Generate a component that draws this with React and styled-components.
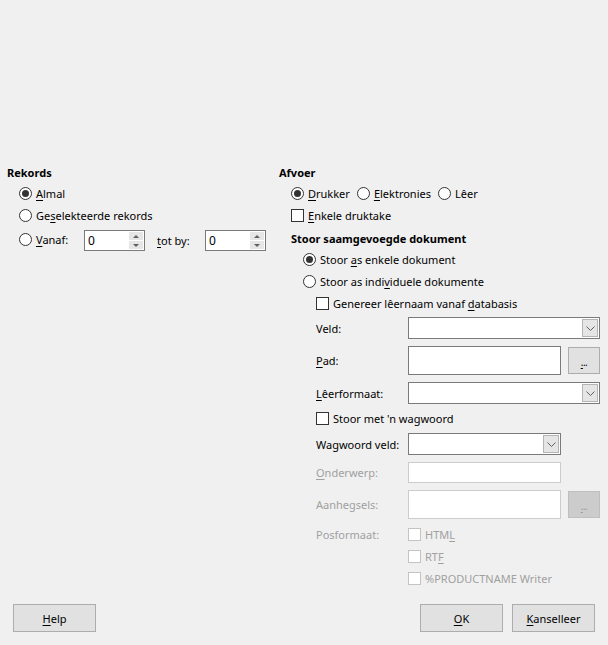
import React from 'react'
import styled, { createGlobalStyle } from 'styled-components'

const Global = createGlobalStyle`
  html, body {
    margin: 0;
    padding: 0;
    background: #f0f0f0;
  }
  body {
    font-family: "Noto Sans", "Open Sans", sans-serif;
    font-size: 11px;
    color: #000;
  }
`

const Page = styled.div`
  width: 608px;
  height: 645px;
  display: flex;
  flex-direction: column;
  box-sizing: border-box;
  padding-top: 164px;
`

const Columns = styled.div`
  display: grid;
  grid-template-columns: 272px 1fr;
  padding-left: 7px;
`

const Column = styled.div`
  display: flex;
  flex-direction: column;
`

const Title = styled.div`
  font-weight: bold;
  height: 17px;
  line-height: 17px;
  margin-left: ${p => p.$indent || 0}px;
  margin-top: ${p => p.$top || 0}px;
  margin-bottom: 1px;
`

const Row = styled.div`
  display: flex;
  align-items: center;
  height: ${p => p.$h || 22}px;
  margin-left: ${p => p.$indent || 0}px;
  margin-top: ${p => p.$top || 0}px;
  white-space: nowrap;
`

const Mn = styled.span`
  text-decoration: underline;
  text-underline-offset: 2px;
`

const Choice = styled.label`
  display: inline-flex;
  align-items: center;
  gap: 4px;
  margin-right: ${p => p.$mr || 0}px;
`

const RadioDot = styled.span`
  width: 13px;
  height: 13px;
  box-sizing: border-box;
  border: 1px solid #333;
  border-radius: 50%;
  background: #fff;
  display: inline-flex;
  align-items: center;
  justify-content: center;
  flex-shrink: 0;
  &::after {
    content: '';
    width: 7px;
    height: 7px;
    border-radius: 50%;
    background: #333;
    display: ${p => (p.$on ? 'block' : 'none')};
  }
`

const Box = styled.span`
  width: 13px;
  height: 13px;
  box-sizing: border-box;
  border: 1px solid ${p => (p.$disabled ? '#c4c4c4' : '#333')};
  background: #fff;
  flex-shrink: 0;
`

const Radio = ({ on, children, mr }) => (
  <Choice $mr={mr}>
    <RadioDot $on={on} />
    <span>{children}</span>
  </Choice>
)

const Check = ({ children, disabled }) => (
  <Choice>
    <Box $disabled={disabled} />
    <span>{children}</span>
  </Choice>
)

const SpinLabel = styled.span`
  width: ${p => p.$w}px;
  margin-left: ${p => p.$ml || 0}px;
`

const SpinWrap = styled.div`
  width: 61px;
  height: 21px;
  box-sizing: border-box;
  border: 1px solid #7a7a7a;
  background: #fff;
  display: flex;
  align-items: stretch;
  padding: 1px;
`

const SpinText = styled.span`
  flex: 1;
  padding-left: 2px;
  line-height: 17px;
  font-size: 12px;
`

const SpinBtns = styled.div`
  width: 14px;
  display: flex;
  flex-direction: column;
  gap: 1px;
`

const SpinBtn = styled.div`
  flex: 1;
  background: #e6e6e6;
  display: flex;
  align-items: center;
  justify-content: center;
  &::after {
    content: '';
    border-left: 3px solid transparent;
    border-right: 3px solid transparent;
    ${p => (p.$up ? 'border-bottom: 3px solid #606060;' : 'border-top: 3px solid #606060;')}
  }
`

const Spin = ({ value }) => (
  <SpinWrap>
    <SpinText>{value}</SpinText>
    <SpinBtns>
      <SpinBtn $up />
      <SpinBtn />
    </SpinBtns>
  </SpinWrap>
)

const Form = styled.div`
  display: grid;
  grid-template-columns: 92px 153px 39px;
  row-gap: 7px;
  margin-left: 37px;
  margin-top: 3px;
`

const FieldLabel = styled.div`
  grid-column: 1 / 2;
  display: flex;
  align-items: center;
  height: ${p => p.$h || 22}px;
  color: ${p => (p.$disabled ? '#a0a0a0' : '#000')};
  white-space: nowrap;
`

const Field = styled.div`
  grid-column: ${p => (p.$wide ? '2 / 4' : '2 / 3')};
  height: ${p => p.$h || 22}px;
  box-sizing: border-box;
  border: 1px solid ${p => (p.$disabled ? '#cccccc' : '#7a7a7a')};
  background: #fff;
  display: flex;
  justify-content: flex-end;
  padding: 1px;
`

const DropBtn = styled.div`
  width: 16px;
  box-sizing: border-box;
  background: #e5e5e5;
  border: 1px solid #b4b4b4;
  display: flex;
  align-items: center;
  justify-content: center;
`

const Chevron = () => (
  <svg width="9" height="5" viewBox="0 0 9 5">
    <path d="M0.5 0.5 L4.5 4.5 L8.5 0.5" fill="none" stroke="#606060" strokeWidth="1" />
  </svg>
)

const Combo = ({ wide }) => (
  <Field $wide={wide}>
    <DropBtn>
      <Chevron />
    </DropBtn>
  </Field>
)

const Browse = styled.div`
  grid-column: 3 / 4;
  justify-self: end;
  align-self: center;
  width: 32px;
  height: ${p => p.$h}px;
  box-sizing: border-box;
  background: ${p => (p.$disabled ? '#cccccc' : '#e1e1e1')};
  border: 1px solid ${p => (p.$disabled ? '#bfbfbf' : '#adadad')};
  color: ${p => (p.$disabled ? '#9a9a9a' : '#000')};
  display: flex;
  align-items: flex-end;
  justify-content: center;
  padding-bottom: 6px;
  font-size: 10px;
  line-height: 10px;
  letter-spacing: -0.5px;
`

const FullRow = styled.div`
  grid-column: 1 / 4;
  display: flex;
  align-items: center;
  height: ${p => p.$h || 15}px;
`

const CheckStack = styled.div`
  grid-column: 2 / 4;
  display: flex;
  flex-direction: column;
  gap: 6px;
  color: #a0a0a0;
`

const StackItem = styled.div`
  display: flex;
  align-items: center;
  height: 16px;
`

const Footer = styled.div`
  margin-top: auto;
  display: flex;
  gap: 9px;
  padding: 0 13px 13px 13px;
`

const Button = styled.button`
  width: 83px;
  height: 28px;
  background: #e1e1e1;
  border: 1px solid #adadad;
  font: inherit;
  color: #000;
  padding: 0;
  margin-left: ${p => (p.$push ? 'auto' : '0')};
`

export default function App() {
  return (
    <Page>
      <Global />
      <Columns>
        <Column>
          <Title>Rekords</Title>
          <Row $indent={12}>
            <Radio on><Mn>A</Mn>lmal</Radio>
          </Row>
          <Row $indent={12}>
            <Radio>Ge<Mn>s</Mn>elekteerde rekords</Radio>
          </Row>
          <Row $indent={12} $top={4} $h={21}>
            <SpinLabel $w={65}>
              <Radio><Mn>V</Mn>anaf:</Radio>
            </SpinLabel>
            <Spin value="0" />
            <SpinLabel $w={48} $ml={12}>
              <Mn>t</Mn>ot by:
            </SpinLabel>
            <Spin value="0" />
          </Row>
        </Column>

        <Column>
          <Title>Afvoer</Title>
          <Row $indent={12}>
            <Radio on mr={7}><Mn>D</Mn>rukker</Radio>
            <Radio mr={7}><Mn>E</Mn>lektronies</Radio>
            <Radio>Lêer</Radio>
          </Row>
          <Row $indent={12}>
            <Check><Mn>E</Mn>nkele druktake</Check>
          </Row>
          <Title $indent={12} $top={4}>Stoor saamgevoegde dokument</Title>
          <Row $indent={24}>
            <Radio on>Stoor <Mn>a</Mn>s enkele dokument</Radio>
          </Row>
          <Row $indent={24}>
            <Radio>Stoor as indi<Mn>v</Mn>iduele dokumente</Radio>
          </Row>
          <Row $indent={37}>
            <Check>Genereer lêernaam vanaf <Mn>d</Mn>atabasis</Check>
          </Row>

          <Form>
            <FieldLabel>Veld:</FieldLabel>
            <Combo wide />

            <FieldLabel $h={29}><span><Mn>P</Mn>ad:</span></FieldLabel>
            <Field $h={29} />
            <Browse $h={27}><Mn>.</Mn>..</Browse>

            <FieldLabel><span><Mn>L</Mn>êerformaat:</span></FieldLabel>
            <Combo wide />

            <FullRow>
              <Check>Stoor met 'n wagwoord</Check>
            </FullRow>

            <FieldLabel>Wagwoord veld:</FieldLabel>
            <Combo />

            <FieldLabel $h={21} $disabled><span><Mn>O</Mn>nderwerp:</span></FieldLabel>
            <Field $h={21} $disabled />

            <FieldLabel $h={29} $disabled>Aanhegsels:</FieldLabel>
            <Field $h={29} $disabled />
            <Browse $h={27} $disabled><Mn>.</Mn>..</Browse>

            <FieldLabel $h={16} $disabled>Posformaat:</FieldLabel>
            <CheckStack>
              <StackItem><Check disabled>HTM<Mn>L</Mn></Check></StackItem>
              <StackItem><Check disabled>RT<Mn>F</Mn></Check></StackItem>
              <StackItem><Check disabled>%PRODUCTNAME Writer</Check></StackItem>
            </CheckStack>
          </Form>
        </Column>
      </Columns>

      <Footer>
        <Button><Mn>H</Mn>elp</Button>
        <Button $push><Mn>O</Mn>K</Button>
        <Button><Mn>K</Mn>anselleer</Button>
      </Footer>
    </Page>
  )
}
